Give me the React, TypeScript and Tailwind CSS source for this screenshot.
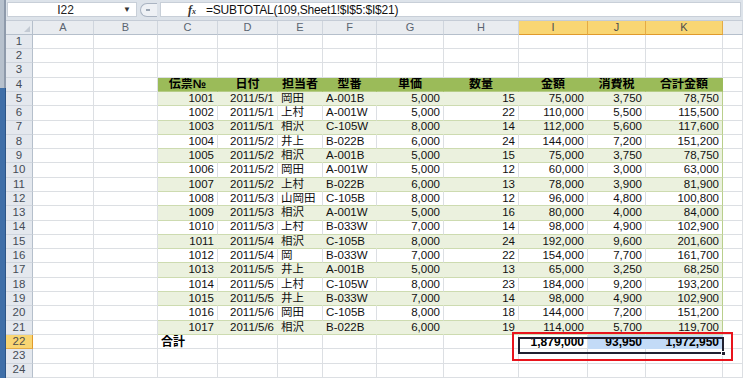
import React from "react";

const LETTERS = ["A", "B", "C", "D", "E", "F", "G", "H", "I", "J", "K", "L"];
const WIDTHS = [
  "w-[61px]",
  "w-[64px]",
  "w-[60px]",
  "w-[60px]",
  "w-[45px]",
  "w-[54px]",
  "w-[67px]",
  "w-[75px]",
  "w-[69px]",
  "w-[58px]",
  "w-[77px]",
  "w-[20px]",
];

const HEADERS = ["伝票№", "日付", "担当者", "型番", "単価", "数量", "金額", "消費税", "合計金額"];
// right or left aligned, per table column (C..K)
const ALIGN = ["r", "r", "l", "l", "r", "r", "r", "r", "r"];

const DATA = [
  ["1001", "2011/5/1", "岡田", "A-001B", "5,000", "15", "75,000", "3,750", "78,750"],
  ["1002", "2011/5/1", "上村", "A-001W", "5,000", "22", "110,000", "5,500", "115,500"],
  ["1003", "2011/5/1", "相沢", "C-105W", "8,000", "14", "112,000", "5,600", "117,600"],
  ["1004", "2011/5/2", "井上", "B-022B", "6,000", "24", "144,000", "7,200", "151,200"],
  ["1005", "2011/5/2", "相沢", "A-001B", "5,000", "15", "75,000", "3,750", "78,750"],
  ["1006", "2011/5/2", "岡田", "A-001W", "5,000", "12", "60,000", "3,000", "63,000"],
  ["1007", "2011/5/2", "上村", "B-022B", "6,000", "13", "78,000", "3,900", "81,900"],
  ["1008", "2011/5/3", "山岡田", "C-105B", "8,000", "12", "96,000", "4,800", "100,800"],
  ["1009", "2011/5/3", "相沢", "A-001W", "5,000", "16", "80,000", "4,000", "84,000"],
  ["1010", "2011/5/3", "上村", "B-033W", "7,000", "14", "98,000", "4,900", "102,900"],
  ["1011", "2011/5/4", "相沢", "C-105B", "8,000", "24", "192,000", "9,600", "201,600"],
  ["1012", "2011/5/4", "岡", "B-033W", "7,000", "22", "154,000", "7,700", "161,700"],
  ["1013", "2011/5/5", "井上", "A-001B", "5,000", "13", "65,000", "3,250", "68,250"],
  ["1014", "2011/5/5", "上村", "C-105W", "8,000", "23", "184,000", "9,200", "193,200"],
  ["1015", "2011/5/5", "井上", "B-033W", "7,000", "14", "98,000", "4,900", "102,900"],
  ["1016", "2011/5/6", "岡田", "C-105B", "8,000", "18", "144,000", "7,200", "151,200"],
  ["1017", "2011/5/6", "相沢", "B-022B", "6,000", "19", "114,000", "5,700", "119,700"],
];

const FormulaBar = () => (
  <div className="h-[21px] bg-[#dde3ea] flex items-center border-b border-[#c5ccd6]">
    {/* Name box */}
    <div className="ml-[1px] w-[130px] h-[15px] bg-white border border-[#c8cfd8] flex items-center relative">
      <span className="flex-1 text-center text-[12px] text-[#222]">I22</span>
      <span className="w-[10px] text-[8px] text-[#333] leading-none mr-[3px]">▼</span>
    </div>
    {/* splitter pill */}
    <div className="ml-[3px] w-[17px] h-[14px] rounded-l-full border border-r-0 border-[#aab4c2] bg-[#eef1f5] flex items-center pl-[5px]">
      <span className="w-[4px] h-[2px] bg-[#9aa5b3]"></span>
    </div>
    {/* formula field */}
    <div className="ml-[3px] flex-1 h-[15px] bg-white border border-[#c8cfd8] flex items-center mr-[2px]">
      <span className="ml-[27px] w-[14px] font-['Liberation_Serif'] italic font-bold text-[12px] leading-none text-[#333]">
        f<span className="text-[8px]">x</span>
      </span>
      <span className="ml-[4px] text-[12px] text-[#111] tracking-[-0.2px]">=SUBTOTAL(109,Sheet1!$I$5:$I$21)</span>
    </div>
  </div>
);

const ColumnHeader = () => (
  <div className="h-[14px] flex">
    <div className="w-[27px] shrink-0 h-full bg-[#e6eaef] border-r border-b border-[#b5bfcb] flex items-end justify-end p-[2px]">
      <div className="w-0 h-0 border-l-[6px] border-l-transparent border-b-[6px] border-b-[#c3cad3]"></div>
    </div>
    {LETTERS.map((l, i) => {
      const sel = i >= 8 && i <= 10;
      return (
        <div
          key={l}
          className={`${WIDTHS[i]} shrink-0 h-full border-r border-b flex items-center justify-center text-[11px] leading-none ${
            sel
              ? "bg-[#f9d673] border-r-[#e4ab45] border-b-[#e09a2c] text-[#4d4d4d]"
              : "bg-[#e9ecf0] border-r-[#cfd5dd] border-b-[#b5bfcb] text-[#5a6470]"
          }`}
        >
          {i < 11 ? l : ""}
        </div>
      );
    })}
  </div>
);

const cellText = (r: number, c: number): string => {
  if (r === 4 && c >= 2 && c <= 10) return HEADERS[c - 2];
  if (r >= 5 && r <= 21 && c >= 2 && c <= 10) return DATA[r - 5][c - 2];
  if (r === 22) {
    if (c === 2) return "合計";
    if (c === 8) return "1,879,000";
    if (c === 9) return "93,950";
    if (c === 10) return "1,972,950";
  }
  return "";
};

const cellClass = (r: number, c: number): string => {
  const inTable = c >= 2 && c <= 10 && r >= 4 && r <= 21;
  if (inTable) {
    if (r === 4) return "bg-[#9bbb59] border-b-[#b5cc86] border-r-[#9bbb59] font-bold justify-center text-[12px] text-black";
    const odd = r % 2 === 1;
    const align = ALIGN[c - 2] === "r" ? "justify-end" : "justify-start";
    const right = c === 10 ? "border-r-[#b9cf8c]" : odd ? "border-r-[#ebf1de]" : "border-r-[#dcdfe3]";
    return `${odd ? "bg-[#ebf1de]" : "bg-white"} border-b-[#cddbb0] ${right} ${align} text-[11.5px] text-[#111]`;
  }
  if (r === 22) {
    if (c === 2) return "bg-white border-r-[#dcdfe3] border-b-[#dcdfe3] font-bold text-[12px] text-black justify-start";
    if (c === 8) return "bg-white border-r-[#dcdfe3] border-b-[#dcdfe3] font-bold text-[12px] text-black justify-end";
    if (c === 9 || c === 10)
      return "bg-[#c3dbf7] border-r-[#c3dbf7] border-b-[#c3dbf7] font-bold text-[12px] text-black justify-end";
  }
  return "bg-white border-r-[#dcdfe3] border-b-[#dcdfe3]";
};

const SheetRow = ({ r }: { r: number }) => {
  const active = r === 22;
  return (
    <div className="h-[14.43px] flex">
      <div
        className={`w-[27px] shrink-0 h-full border-r border-b flex items-center justify-center text-[11.5px] leading-none ${
          active
            ? "bg-[#f9d673] border-r-[#e09a2c] border-b-[#e4ab45] text-[#4d4d4d]"
            : "bg-[#e4e8ee] border-r-[#b5bfcb] border-b-[#cfd5dd] text-[#444c56]"
        }`}
      >
        {r}
      </div>
      {LETTERS.map((l, c) => (
        <div
          key={l}
          className={`${WIDTHS[c]} shrink-0 h-full border-r border-b flex items-center px-[3px] whitespace-nowrap overflow-hidden leading-none ${cellClass(
            r,
            c
          )}`}
        >
          {cellText(r, c)}
        </div>
      ))}
    </div>
  );
};

const App = () => {
  const rows = Array.from({ length: 24 }, (_, i) => i + 1);
  return (
    <div className="w-[743px] h-[378px] overflow-hidden relative bg-white flex font-['Liberation_Sans','Noto_Sans_CJK_JP',sans-serif]">
      {/* window edge */}
      <div className="w-[6px] shrink-0 flex flex-col">
        <div className="h-[88px] bg-[#b7c1cd] border-r-2 border-[#8e9aab]"></div>
        <div className="flex-1 bg-[#3f6fa8] border-r border-[#2c5587]"></div>
      </div>
      <div className="flex-1 min-w-0 flex flex-col overflow-hidden">
        <FormulaBar />
        <ColumnHeader />
        {rows.map((r) => (
          <SheetRow key={r} r={r} />
        ))}
      </div>

      {/* selection I22:K22 */}
      <div className="absolute left-[518px] top-[337px] w-[206px] h-[17px] border-2 border-[#202030] pointer-events-none"></div>
      <div className="absolute left-[721px] top-[351px] w-[5px] h-[5px] bg-[#202030] border border-white"></div>

      {/* red highlight */}
      <div className="absolute left-[512px] top-[332px] w-[221px] h-[29px] border-2 border-[#e8141c] pointer-events-none"></div>
    </div>
  );
};

export default App;
